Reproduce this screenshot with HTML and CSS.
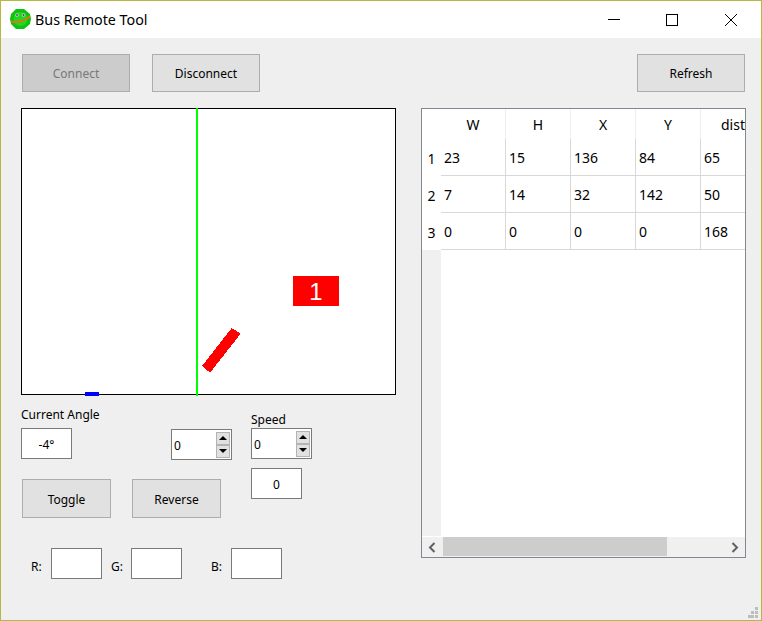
FILE: index.html
```html
<!DOCTYPE html>
<html lang="en">
<head>
    <meta charset="UTF-8">
    <meta name="viewport" content="width=device-width, initial-scale=1.0">
    <title>Bus Remote Tool</title>
    <link rel="stylesheet" href="styles.css">
</head>
<body>
    <div class="window">
        <div class="titlebar">
            <svg class="app-icon" width="21" height="21" viewBox="0 0 21 21">
                <polygon points="6,0 14,0 20,5 21,10 20,15 14,20 6,20 1,15 0,10 1,5" fill="#0cc40c"/>
                <ellipse cx="10.500" cy="10" rx="7" ry="7" fill="#1fd81f"/>
                <path d="M1 12.500 C7 14 14 12 20 7.500" stroke="#e8701a" stroke-width="2" fill="none"/>
                <circle cx="7" cy="6" r="1.800" fill="#c4d4c4"/>
                <circle cx="13.500" cy="6" r="1.800" fill="#c4d4c4"/>
                <circle cx="7" cy="6" r="0.900" fill="#445"/>
                <circle cx="13.500" cy="6" r="0.900" fill="#445"/>
            </svg>
            <span class="app-title">Bus Remote Tool</span>
            <div class="win-buttons">
                <div class="win-btn">
                    <svg width="12" height="12" viewBox="0 0 12 12"><path d="M0 5.500H12" stroke="#000" fill="none"/></svg>
                </div>
                <div class="win-btn">
                    <svg width="12" height="12" viewBox="0 0 12 12"><rect x="0.500" y="0.500" width="11" height="11" stroke="#000" fill="none"/></svg>
                </div>
                <div class="win-btn">
                    <svg width="12" height="12" viewBox="0 0 12 12"><path d="M0 0L12 12M12 0L0 12" stroke="#000" fill="none"/></svg>
                </div>
            </div>
        </div>

        <div class="content">
            <div class="toolbar">
                <button class="btn btn-top" disabled>Connect</button>
                <button class="btn btn-top">Disconnect</button>
                <button class="btn btn-top btn-refresh">Refresh</button>
            </div>

            <div class="main">
                <div class="left">
                    <div class="canvas">
                        <div class="center-line"></div>
                        <div class="bus-marker"></div>
                        <div class="box-label">1</div>
                        <svg class="canvas-shape" width="373" height="285" viewBox="0 0 373 285">
                            <polygon points="209.700,219 218.700,224.700 188,263.700 180,257" fill="#ff0000" shape-rendering="crispEdges"/>
                        </svg>
                    </div>

                    <div class="controls">
                        <div class="controls-main">
                            <div class="controls-top">
                                <div class="angle">
                                    <div class="label">Current Angle</div>
                                    <div class="field">-4°</div>
                                </div>
                                <div class="spin spin-steer">
                                    <span class="spin-value">0</span>
                                    <div class="spin-arrows">
                                        <div class="spin-arrow"><i class="arrow-up"></i></div>
                                        <div class="spin-arrow"><i class="arrow-down"></i></div>
                                    </div>
                                </div>
                            </div>
                            <div class="controls-buttons">
                                <button class="btn btn-action">Toggle</button>
                                <button class="btn btn-action">Reverse</button>
                            </div>
                        </div>
                        <div class="speed">
                            <div class="label">Speed</div>
                            <div class="spin">
                                <span class="spin-value">0</span>
                                <div class="spin-arrows">
                                    <div class="spin-arrow"><i class="arrow-up"></i></div>
                                    <div class="spin-arrow"><i class="arrow-down"></i></div>
                                </div>
                            </div>
                            <div class="field field-speed">0</div>
                        </div>
                    </div>

                    <div class="rgb">
                        <span class="rgb-label">R:</span>
                        <div class="field"></div>
                        <span class="rgb-label rgb-g">G:</span>
                        <div class="field"></div>
                        <span class="rgb-label rgb-b">B:</span>
                        <div class="field"></div>
                    </div>
                </div>

                <div class="table-view">
                    <div class="table-scroll">
                        <table class="data">
                            <thead>
                                <tr>
                                    <th class="corner"></th>
                                    <th>W</th><th>H</th><th>X</th><th>Y</th><th>dist</th>
                                </tr>
                            </thead>
                            <tbody>
                                <tr><th>1</th><td>23</td><td>15</td><td>136</td><td>84</td><td>65</td></tr>
                                <tr><th>2</th><td>7</td><td>14</td><td>32</td><td>142</td><td>50</td></tr>
                                <tr><th>3</th><td>0</td><td>0</td><td>0</td><td>0</td><td>168</td></tr>
                            </tbody>
                        </table>
                        <div class="row-head-rest"></div>
                    </div>
                    <div class="hscroll">
                        <svg width="8" height="11" viewBox="0 0 8 11"><path d="M6.500 1L2 5.500L6.500 10" stroke="#606060" stroke-width="2" fill="none"/></svg>
                        <div class="hscroll-track"><div class="hscroll-thumb"></div></div>
                        <svg width="8" height="11" viewBox="0 0 8 11"><path d="M1.500 1L6 5.500L1.500 10" stroke="#606060" stroke-width="2" fill="none"/></svg>
                    </div>
                </div>
            </div>
        </div>

        <svg class="size-grip" width="10" height="11" viewBox="0 0 10 11" fill="#bdbdbd">
            <rect x="7" y="0" width="3" height="3"/>
            <rect x="3" y="4" width="3" height="3"/>
            <rect x="7" y="4" width="3" height="3"/>
            <rect x="0" y="8" width="3" height="3"/>
            <rect x="3" y="8" width="3" height="3"/>
            <rect x="7" y="8" width="3" height="3"/>
        </svg>
    </div>
</body>
</html>
```

FILE: styles.css
```css
* {
    box-sizing: border-box;
}
body {
    margin: 0;
    font-family: "Noto Sans", "Open Sans", sans-serif;
    font-size: 12px;
    color: #000;
    background-color: #efefef;
}
.window {
    position: relative;
    width: 762px;
    height: 621px;
    border: 1px solid #b5b93f;
    background-color: #efefef;
    overflow: hidden;
}
.titlebar {
    display: flex;
    align-items: center;
    height: 37px;
    background-color: #fff;
    padding-left: 9px;
}
.app-icon {
    flex: none;
}
.app-title {
    margin-left: 4px;
    font-size: 14.300px;
}
.win-buttons {
    display: flex;
    margin-left: auto;
    margin-right: 1px;
}
.win-btn {
    display: flex;
    align-items: center;
    justify-content: center;
    width: 58px;
    height: 37px;
}
.win-btn:last-child {
    margin-left: 1px;
}
.content {
    padding: 16px 16px 0 20px;
}
.toolbar {
    display: flex;
    gap: 22px;
    padding-left: 1px;
}
.btn {
    height: 38px;
    border: 1px solid #adadad;
    background-color: #e1e1e1;
    font-family: inherit;
    font-size: 12px;
    color: #000;
    padding: 0;
}
.btn:disabled {
    background-color: #cccccc;
    color: #787878;
}
.btn-top {
    width: 108px;
}
.btn-refresh {
    margin-left: auto;
}
.main {
    display: flex;
    margin-top: 16px;
}
.left {
    width: 400px;
    flex: none;
}
.canvas {
    position: relative;
    width: 375px;
    height: 287px;
    background-color: #fff;
    border: 1px solid #000;
}
.center-line {
    position: absolute;
    left: 174px;
    top: -1px;
    width: 2px;
    height: 288px;
    background-color: #00ff00;
}
.bus-marker {
    position: absolute;
    left: 63px;
    top: 283px;
    width: 14px;
    height: 4px;
    background-color: #0000ff;
}
.box-label {
    position: absolute;
    left: 271px;
    top: 167px;
    width: 46px;
    height: 30px;
    line-height: 31px;
    background-color: #ff0000;
    color: #fff;
    font-family: "Liberation Sans", Arial, sans-serif;
    font-size: 24px;
    text-align: center;
}
.canvas-shape {
    position: absolute;
    left: 0;
    top: 0;
}
.controls {
    display: flex;
    margin-top: 12px;
}
.controls-main {
    width: 230px;
}
.controls-top {
    display: flex;
    align-items: flex-end;
    justify-content: space-between;
    padding-right: 19px;
}
.label {
    line-height: 16px;
}
.angle .label {
    margin-bottom: 5px;
}
.field {
    display: flex;
    align-items: center;
    justify-content: center;
    width: 51px;
    height: 31px;
    padding-top: 1px;
    background-color: #fff;
    border: 1px solid #7a7a7a;
}
.spin {
    display: flex;
    align-items: center;
    justify-content: space-between;
    width: 61px;
    height: 31px;
    background-color: #fff;
    border: 1px solid #7a7a7a;
    padding: 0 1px 0 2px;
}
.spin-value {
    padding-top: 1px;
}
.spin-steer {
    position: relative;
    top: 1px;
}
.spin-arrows {
    display: flex;
    flex-direction: column;
    width: 14px;
    height: 26px;
}
.spin-arrow {
    display: flex;
    align-items: center;
    justify-content: center;
    flex: 1;
    background-color: #e1e1e1;
    border: 1px solid #b4b4b4;
}
.arrow-up {
    border-left: 4px solid transparent;
    border-right: 4px solid transparent;
    border-bottom: 4px solid #000;
}
.arrow-down {
    border-left: 4px solid transparent;
    border-right: 4px solid transparent;
    border-top: 4px solid #000;
}
.controls-buttons {
    display: flex;
    gap: 21px;
    margin-top: 20px;
    padding-left: 1px;
}
.btn-action {
    width: 89px;
    height: 39px;
    padding-top: 2px;
}
.speed {
    padding-top: 5px;
}
.speed .label {
    margin-bottom: 0;
}
.field-speed {
    margin-top: 9px;
}
.rgb {
    display: flex;
    align-items: center;
    margin-top: 30px;
    padding-left: 10px;
}
.rgb-label {
    width: 20px;
    padding-top: 5px;
}
.rgb-g {
    margin-left: 9px;
}
.rgb-b {
    margin-left: 29px;
}
.table-view {
    display: flex;
    flex-direction: column;
    width: 325px;
    height: 450px;
    background-color: #fff;
    border: 1px solid #828790;
}
.table-scroll {
    display: flex;
    flex-direction: column;
    flex: 1;
    min-height: 0;
    overflow: hidden;
}
.data {
    flex: none;
    table-layout: fixed;
    border-collapse: separate;
    border-spacing: 0;
    width: 344px;
    font-size: 14px;
}
.data th {
    font-weight: normal;
    padding: 0;
    text-align: center;
}
.data tbody th {
    padding-top: 2px;
}
.data thead th {
    height: 30px;
    border-right: 1px solid #eee;
    width: 65px;
}
.data thead .corner {
    width: 19px;
    border-right: 0;
}
.data td {
    height: 37px;
    padding: 0 0 0 3px;
    border-right: 1px solid #d8d8d8;
    border-bottom: 1px solid #d8d8d8;
}
.row-head-rest {
    flex: 1;
    width: 19px;
    background-color: #f0f0f0;
    margin-bottom: 1px;
}
.hscroll {
    display: flex;
    align-items: center;
    height: 20px;
    background-color: #f0f0f0;
    padding: 0 6px;
}
.hscroll-track {
    flex: 1;
    height: 100%;
    padding: 0 0 1px 7px;
}
.hscroll-thumb {
    width: 224px;
    height: 100%;
    background-color: #cdcdcd;
}
.size-grip {
    position: absolute;
    right: 3px;
    bottom: 2px;
}
```
